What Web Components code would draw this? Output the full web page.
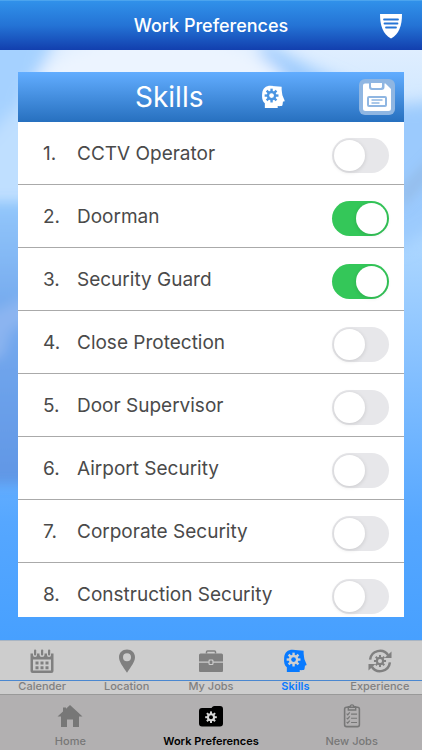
<!DOCTYPE html>
<html lang="en">
<head>
<meta charset="utf-8">
<meta name="viewport" content="width=device-width, initial-scale=1">
<title>Work Preferences</title>
<style>
  html, body { margin: 0; height: 100%; }
  body { font-family: Inter, "Liberation Sans", sans-serif; color: #4a4a4a; }
</style>
</head>
<body>
<work-app></work-app>

<script>
const gear = (cx, cy, r, fill, hole) => {
  let teeth = '';
  for (let i = 0; i < 8; i++) {
    teeth += `<rect x="${-r * 0.17}" y="${-r}" width="${r * 0.34}" height="${r * 0.5}" transform="rotate(${i * 45})"/>`;
  }
  return `<g transform="translate(${cx} ${cy})" fill="${fill}">${teeth}<circle r="${r * 0.7}"/><circle r="${r * 0.34}" fill="${hole}"/></g>`;
};
const head = (cut) => `
  <path fill="currentColor" d="M4 24v-5C1.5 17 .8 14 1.2 9 1.6 3.500 5 .8 10 .8l11.500 .9v3c.4 2 .3 4 .8 6l2.200 5.200c.2 1-.2 1.300-1.600 1.400l-.5 3.500c-.2 1-1 1.300-5 1.200v2z"/>
  ${gear(11, 11, 7.200, cut, 'currentColor')}`;

const ICONS = {
  shield: ['0 0 24 26', `
    <path fill="currentColor" d="M1 1h22c0 12-3 20-11 24.500C4 21 1 13 1 1z"/>
    <g stroke="#2675d6" stroke-width="1.800" stroke-linecap="round"><path d="M5 6.500h14M5.500 10.500h13M7 14.500h10"/></g>`],
  skills: ['0 0 25 25', head('#d0d0d0')],
  skillsHeader: ['0 0 25 25', head('#4a95e2')],
  save: ['0 0 36 36', `
    <rect width="36" height="36" rx="6" fill="#8fb6e2"/>
    <path fill="#fff" d="M6 4.500h4V8q0 3 3 3h9.500q3 0 3-3V4.500h1L32 10v19.500q0 2.500-2.500 2.500h-23Q4 32 4 29.500v-23q0-2 2-2zM12 4h11v3.500q0 1.500-1.500 1.500h-8Q12 9 12 7.500z"/>
    <rect x="9" y="18" width="18" height="9" rx="1" fill="none" stroke="#8fb6e2" stroke-width="2"/>
    <path d="M12.500 21h11M12.500 24h8" stroke="#8fb6e2" stroke-width="1.300"/>`],
  calendar: ['0 0 24 24', `
    <path fill="currentColor" fill-rule="evenodd" d="M.5 4.500H3V6q0 2 2 2t2-2V4.500h2.500V6q0 2 2.500 2t2.500-2V4.500H17V6q0 2 2 2t2-2V4.500h2.500V22q0 2-2 2h-19q-2 0-2-2zM3 10.500v11h18v-11z"/>
    <g fill="currentColor"><rect x="4" y=".5" width="2.200" height="6" rx="1"/><rect x="11" y=".5" width="2.200" height="6" rx="1"/><rect x="18" y=".5" width="2.200" height="6" rx="1"/>
    <path d="M5.500 12.500h3v3h-3zM10.500 12.500h3v3h-3zM15.500 12.500h3v3h-3zM5.500 17.200h3v3h-3zM10.500 17.200h3v3h-3zM15.500 17.200h3v3h-3z"/></g>`],
  pin: ['0 0 24 24', `
    <path fill="currentColor" fill-rule="evenodd" d="M12 .5c4.700 0 8 3.300 8 7.700 0 4.500-4 9.300-8 15.600C8 17.500 4 12.700 4 8.200 4 3.800 7.300.5 12 .5zM12 4.200a4 4 0 1 0 0 8 4 4 0 0 0 0-8z"/>`],
  briefcase: ['0 0 26 24', `
    <path fill="none" stroke="currentColor" stroke-width="1.500" d="M8.500 4.500V3q0-1 1-1h7q1 0 1 1v1.500"/>
    <path fill="currentColor" d="M2.500 4.500h21q1.500 0 1.500 1.500v6.500h-9.500v-.8q0-1.200-1.200-1.200h-2.600q-1.200 0-1.200 1.200v.8H1V6q0-1.500 1.500-1.500zM1 13.800h9.500v1q0 1.200 1.200 1.200h2.600q1.200 0 1.200-1.200v-1H25V22q0 1-1 1H2q-1 0-1-1z"/>
    <rect x="11.600" y="11.500" width="2.800" height="3.500" rx=".6" fill="currentColor"/>`],
  experience: ['0 0 25 25', `
    <g fill="none" stroke="currentColor" stroke-width="2.600"><path d="M2.200 11A10.300 10.300 0 0 1 21 6.500M22.800 14A10.300 10.300 0 0 1 4 18.500"/></g>
    <path fill="currentColor" d="M24.500 2.500v7h-7.300zM.5 22.500v-7h7.300z"/>
    ${gear(12.500, 12.500, 6.300, 'currentColor', '#d0d0d0')}`],
  home: ['0 0 26 24', `
    <path fill="currentColor" d="M13 1 25.500 12.500H22V23h-6v-7.500h-6V23H4V12.500H.5L6 7.400V3.500h3v1.200z"/>`],
  folder: ['0 0 26 24', `
    <path fill="currentColor" d="M4 4h9.500l1-1.200Q15.300 2 16.500 2H22q3 0 3 3v14.500q0 3-3 3H4q-3 0-3-3V7q0-3 3-3z"/>
    ${gear(13, 13.200, 5.800, '#d8d8d8', 'currentColor')}`],
  clipboard: ['0 0 20 26', `
    <g fill="none" stroke="currentColor"><rect x="2" y="3.500" width="16" height="21" rx="2" stroke-width="1.700"/>
    <path stroke-width="1.500" d="M6 3v3.500h8V3h-2q0-2-2-2T8 3z"/>
    <path stroke-width="1.200" d="M9 11h6.500M9 15.500h6.500M9 20h6.500M4.200 10.500l1.200 1.200L7.500 9M4.200 15l1.200 1.200 2.100-2.700M4.200 19.500l1.200 1.200L7.500 18"/></g>`]
};

const define = (name, render) => customElements.define(name, class extends HTMLElement {
  connectedCallback() {
    if (this.shadowRoot) return;
    const root = this.attachShadow({ mode: 'open' });
    root.innerHTML = render(this);
  }
});

define('app-icon', el => {
  const [box, body] = ICONS[el.getAttribute('name')];
  return `<style>:host{display:block;width:24px;height:24px}svg{display:block;width:100%;height:100%}</style>
    <svg viewBox="${box}" aria-hidden="true">${body}</svg>`;
});

define('app-bar', () => `
  <style>
    :host { display: grid; grid-template-columns: 1fr auto 1fr; align-items: center; box-sizing: border-box; height: 50px; padding: 0 19px;
      color: #fff; background: linear-gradient(#3091ea, #2473d5 50%, #123fae); border-top: 1px solid #4ba4ee; }
    h1 { grid-column: 2; margin: 0; font-size: 18px; line-height: 24px; font-weight: 500; white-space: nowrap; }
    a { justify-self: end; color: inherit; }
    app-icon { height: 26px; }
  </style>
  <h1><slot></slot></h1>
  <a href="#security" aria-label="Security"><app-icon name="shield"></app-icon></a>`);

define('sky-backdrop', () => `
  <style>
    :host { display: block; position: absolute; inset: 0; overflow: hidden; }
    svg { display: block; width: 100%; height: 100%; }
  </style>
  <svg viewBox="0 0 422 590" preserveAspectRatio="none" aria-hidden="true">
    <defs>
      <linearGradient id="base" x1="0" y1="0" x2="0" y2="1">
        <stop offset="0" stop-color="#dfeeff"/><stop offset=".3" stop-color="#b1d9ff"/><stop offset=".55" stop-color="#83bfff"/><stop offset=".8" stop-color="#56a7ff"/><stop offset="1" stop-color="#47a0ff"/>
      </linearGradient>
      <linearGradient id="left" x1="0" y1="0" x2="0" y2="1">
        <stop offset="0" stop-color="#93c7fb"/><stop offset=".35" stop-color="#77acef"/><stop offset="1" stop-color="#6096e5"/>
      </linearGradient>
      <filter id="soft" x="-50%" y="-50%" width="200%" height="200%"><feGaussianBlur stdDeviation="8"/></filter>
      <filter id="fine" x="-50%" y="-50%" width="200%" height="200%"><feGaussianBlur stdDeviation="6"/></filter>
    </defs>
    <rect width="422" height="590" fill="url(#base)"/>
    <g filter="url(#soft)">
      <path fill="#a5d1ff" d="M-40-20H60L20 60 0 110H-40z"/>
      <path fill="#9bcafd" d="M262-10q40 26 80 42l50 24 60-6v120l-55 30-150-80z"/>
      <ellipse cx="160" cy="46" rx="130" ry="62" fill="#ecf4ff"/>
      <path fill="#bfdfff" d="M12 60h30v94H-40v-34z"/>
    </g>
    <g filter="url(#fine)">
      <path fill="url(#left)" d="M-40 152H30v282H-40z"/>
      <path fill="#9bbcf1" opacity=".6" d="M-20 268l50-22v22l-20 14-6 24-24 8z"/>
      <path fill="#8eafd8" opacity=".45" d="M400 138l40-40v20l-40 42z"/>
    </g>
  </svg>`);

define('skills-panel', el => `
  <style>
    :host { display: flex; flex-direction: column; min-height: 0; background: #fff; overflow: hidden; position: relative; }
    header { flex: none; display: grid; grid-template-columns: 126px 1fr; align-items: center; height: 50px; padding: 0 9px 0 117px;
      color: #fff; background: linear-gradient(#62adff, #2770bf); }
    h2 { margin: 0; font-size: 28px; line-height: 34px; font-weight: 400; }
    .tools { display: flex; align-items: center; justify-content: space-between; }
    button { padding: 0; border: 0; background: none; }
    button app-icon { width: 36px; height: 36px; }
    ol { margin: 0; padding: 0; list-style: none; flex: 1; min-height: 0; overflow: hidden; }
  </style>
  <header><h2>${el.getAttribute('heading')}</h2>
    <div class="tools"><app-icon name="skillsHeader"></app-icon>
    <button type="button" aria-label="Save"><app-icon name="save"></app-icon></button></div>
  </header>
  <ol role="list"><slot></slot></ol>`);

define('skill-row', el => `
  <style>
    :host { display: block; }
    label { display: flex; align-items: center; box-sizing: border-box; height: 63px; padding: 5px 15px 0 25px; border-bottom: 1px solid #aaa;
      font-size: 19px; line-height: 24px; }
    .n, .t { padding-bottom: 4px; }
    .n { width: 34px; }
    .t { flex: 1; white-space: nowrap; }
    input { appearance: none; margin: 0; flex: none; box-sizing: border-box; width: 57px; height: 35px; padding: 2px; border-radius: 18px; background: #e7e7ea; display: flex; }
    input::before { content: ""; width: 31px; height: 31px; border-radius: 50%; background: #fff; box-shadow: 0 1px 4px #0002; }
    input:checked { background: #34c759; justify-content: flex-end; }
  </style>
  <label><span class="n">${el.getAttribute('number')}.</span><span class="t">${el.textContent}</span>
    <input type="checkbox" role="switch" ${el.hasAttribute('on') ? 'checked' : ''}></label>`);

define('tab-bar', () => `
  <style>
    :host { display: block; background: #cdcdcd; color: #808080; border-top: 1px solid #a9b5c3; }
    nav { display: flex; box-sizing: border-box; height: 53px; background: linear-gradient(#4b88d0, #4b88d0) 0 39px / 100% 1px no-repeat; }
    :host([main]) { background: #b2b0b1; color: #777; border-color: #999; }
    :host([main]) nav { height: 55px; background: none; }
  </style>
  <nav><slot></slot></nav>`);

define('tab-item', el => `
  <style>
    :host { flex: 1 1 0; min-width: 0; }
    a { display: flex; flex-direction: column; align-items: center; gap: 6px; padding-top: 8px; color: inherit; text-decoration: none; font-size: 11px; line-height: 14px; font-weight: 500; white-space: nowrap; }
    :host([icon="skills"]) a { color: #087aff; font-weight: 600; }
    :host([icon="folder"]) a { color: #000; font-weight: 600; }
    :host([icon="home"]) a, :host([icon="folder"]) a, :host([icon="clipboard"]) a { padding-top: 9px; }
    app-icon { width: 26px; }
  </style>
  <a href="#${el.getAttribute('icon')}"><app-icon name="${el.getAttribute('icon')}"></app-icon><span><slot></slot></span></a>`);

define('work-app', () => `
  <style>
    :host { display: flex; flex-direction: column; height: 100vh; }
    app-bar, tab-bar { flex: none; }
    main { position: relative; flex: 1; min-height: 0; display: flex; box-sizing: border-box; padding: 22px 18px 23px; }
    skills-panel { flex: 1; }
  </style>
  <app-bar>Work Preferences</app-bar>
  <main><sky-backdrop></sky-backdrop>
    <skills-panel heading="Skills">
      <skill-row role="listitem" number="1">CCTV Operator</skill-row>
      <skill-row role="listitem" number="2" on>Doorman</skill-row>
      <skill-row role="listitem" number="3" on>Security Guard</skill-row>
      <skill-row role="listitem" number="4">Close Protection</skill-row>
      <skill-row role="listitem" number="5">Door Supervisor</skill-row>
      <skill-row role="listitem" number="6">Airport Security</skill-row>
      <skill-row role="listitem" number="7">Corporate Security</skill-row>
      <skill-row role="listitem" number="8">Construction Security</skill-row>
    </skills-panel>
  </main>
  <tab-bar>
    <tab-item icon="calendar">Calender</tab-item>
    <tab-item icon="pin">Location</tab-item>
    <tab-item icon="briefcase">My Jobs</tab-item>
    <tab-item icon="skills">Skills</tab-item>
    <tab-item icon="experience">Experience</tab-item>
  </tab-bar>
  <tab-bar main>
    <tab-item icon="home">Home</tab-item>
    <tab-item icon="folder">Work Preferences</tab-item>
    <tab-item icon="clipboard">New Jobs</tab-item>
  </tab-bar>`);
</script>
</body>
</html>
